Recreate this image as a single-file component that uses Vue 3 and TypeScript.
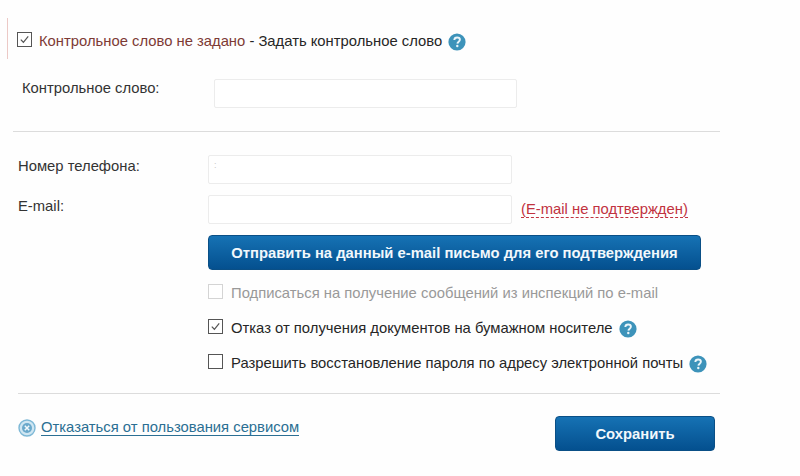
<script setup lang="ts">
interface Option {
  label: string
  checked: boolean
  disabled: boolean
  help: boolean
}

const options: Option[] = [
  { label: 'Подписаться на получение сообщений из инспекций по e-mail', checked: false, disabled: true, help: false },
  { label: 'Отказ от получения документов на бумажном носителе', checked: true, disabled: false, help: true },
  { label: 'Разрешить восстановление пароля по адресу электронной почты', checked: false, disabled: false, help: true },
]
</script>

<template>
  <div class="page">
    <section class="secret-head">
      <span class="check">
        <svg viewBox="0 0 14 14" class="tick"><path d="M3 7.2 L5.8 10 L11 3.6" /></svg>
      </span>
      <span class="warn">Контрольное слово не задано</span>
      <span class="sep">&nbsp;- Задать контрольное слово</span>
      <svg class="help" viewBox="0 0 18 18">
        <circle cx="9" cy="9" r="8.6" fill="#3d93ba" />
        <path d="M6.3 7 C6.4 5.3 7.6 4.5 9.1 4.5 C10.8 4.5 11.9 5.5 11.9 6.8 C11.9 8.6 9.5 8.8 9.4 10.6" fill="none" stroke="#eaf5fa" stroke-width="1.9" />
        <circle cx="9.3" cy="13" r="1.2" fill="#eaf5fa" />
      </svg>
    </section>

    <div class="secret-row">
      <label class="secret-label">Контрольное слово:</label>
      <div class="field secret-field"></div>
    </div>

    <hr class="rule rule-top" />

    <div class="contact-row phone-row">
      <label class="contact-label">Номер телефона:</label>
      <div class="field contact-field"><span class="masked">:</span></div>
    </div>

    <div class="contact-row email-row">
      <label class="contact-label">E-mail:</label>
      <div class="field contact-field"></div>
      <span class="unconfirmed">(E-mail не подтвержден)</span>
    </div>

    <div class="options">
      <button class="btn btn-confirm" type="button">Отправить на данный e-mail письмо для его подтверждения</button>
      <div class="option-list">
        <div v-for="o in options" :key="o.label" class="option" :class="{ disabled: o.disabled }">
          <span class="check">
            <svg v-if="o.checked" viewBox="0 0 14 14" class="tick"><path d="M3 7.2 L5.8 10 L11 3.6" /></svg>
          </span>
          <span class="option-label">{{ o.label }}</span>
          <svg v-if="o.help" class="help" viewBox="0 0 18 18">
            <circle cx="9" cy="9" r="8.6" fill="#3d93ba" />
            <path d="M6.3 7 C6.4 5.3 7.6 4.5 9.1 4.5 C10.8 4.5 11.9 5.5 11.9 6.8 C11.9 8.6 9.5 8.8 9.4 10.6" fill="none" stroke="#eaf5fa" stroke-width="1.9" />
            <circle cx="9.3" cy="13" r="1.2" fill="#eaf5fa" />
          </svg>
        </div>
      </div>
    </div>

    <hr class="rule rule-bottom" />

    <footer class="foot">
      <div class="refuse">
        <svg class="x-icon" viewBox="0 0 18 18">
          <circle cx="9" cy="9" r="8" fill="#cfe6f2" stroke="#7db8d6" stroke-width="1.4" />
          <circle cx="9" cy="9" r="5" fill="#6aa9cb" />
          <path d="M6.8 6.8 L11.2 11.2 M11.2 6.8 L6.8 11.2" stroke="#f2f9fc" stroke-width="1.5" />
        </svg>
        <a class="refuse-link">Отказаться от пользования сервисом</a>
      </div>
      <button class="btn btn-save" type="button">Сохранить</button>
    </footer>
  </div>
</template>

<style>
html, body { margin: 0; background: #fff; }
</style>

<style scoped>
.page {
  width: 800px;
  height: 476px;
  box-sizing: border-box;
  padding-top: 18px;
  overflow: hidden;
  background: #fefefe;
  font-family: "Liberation Sans", Arial, sans-serif;
  font-size: 14.8px;
  color: #262626;
}
.secret-head {
  display: flex;
  align-items: center;
  box-sizing: border-box;
  height: 41px;
  margin-left: 7px;
  padding: 5px 0 0 9px;
  border-left: 1px solid #ecc9c6;
}
.check {
  flex: none;
  width: 13px;
  height: 13px;
  margin-bottom: 3px;
  border: 1px solid #555;
  background: #fff;
  display: flex;
}
.tick { width: 13px; height: 13px; }
.tick path { fill: none; stroke: #555; stroke-width: 1.3; }
.secret-head .check { margin-right: 7px; }
.warn { color: #7d3a35; }
.sep { color: #262626; }
.help { width: 18px; height: 18px; flex: none; margin-left: 6px; margin-top: 2px; }
.secret-row {
  display: flex;
  align-items: flex-start;
  margin-top: 20px;
  padding-left: 22px;
}
.secret-label { width: 192px; margin-top: 1px; color: #333; }
.field {
  box-sizing: border-box;
  background: #fff;
  border: 1px solid #ececec;
  border-radius: 2px;
}
.secret-field { width: 303px; height: 29px; }
.rule {
  height: 1px;
  border: 0;
  margin: 0;
  background: #dcdcdc;
}
.rule-top { width: 707px; margin: 23px 0 0 13px; }
.contact-row {
  display: flex;
  align-items: flex-start;
  padding-left: 18px;
}
.phone-row { margin-top: 23px; }
.email-row { margin-top: 11px; }
.contact-label { width: 190px; margin-top: 3px; color: #333; }
.contact-field { width: 304px; height: 29px; }
.masked { display: block; margin: 4px 0 0 5px; font-size: 9px; color: #c8c8c8; }
.unconfirmed {
  margin: 6px 0 0 9px;
  color: #c1323f;
  line-height: 16px;
  border-bottom: 1px dashed #c1323f;
}
.options { padding-left: 208px; margin-top: 11px; }
.btn {
  display: block;
  border: 1px solid #0a4f86;
  border-radius: 4px;
  background: linear-gradient(#1672b4, #04508f);
  color: #f2f8fc;
  font-family: inherit;
  font-size: 14.8px;
  font-weight: 700;
  padding: 0;
  box-sizing: border-box;
}
.btn-confirm { width: 493px; height: 35px; }
.option-list { margin-top: 14px; display: flex; flex-direction: column; }
.option { display: flex; align-items: center; height: 18px; margin-bottom: 17px; }
.option:last-child { margin-bottom: 21px; }
.option .check { margin-right: 8px; }
.option.disabled { color: #999; }
.option.disabled .check { border-color: #d4d4d4; }
.foot {
  display: flex;
  justify-content: space-between;
  align-items: flex-start;
  width: 715px;
  margin-top: 22px;
  padding-left: 18px;
  box-sizing: border-box;
}
.refuse { display: flex; align-items: center; margin-top: 3px; }
.x-icon { width: 18px; height: 18px; margin-right: 5px; }
.refuse-link {
  color: #2b6f93;
  border-bottom: 1px solid #2b6f93;
  line-height: 15px;
}
.btn-save { width: 160px; height: 35px; }
.rule-bottom { width: 702px; margin: 0 0 0 18px; }
</style>
